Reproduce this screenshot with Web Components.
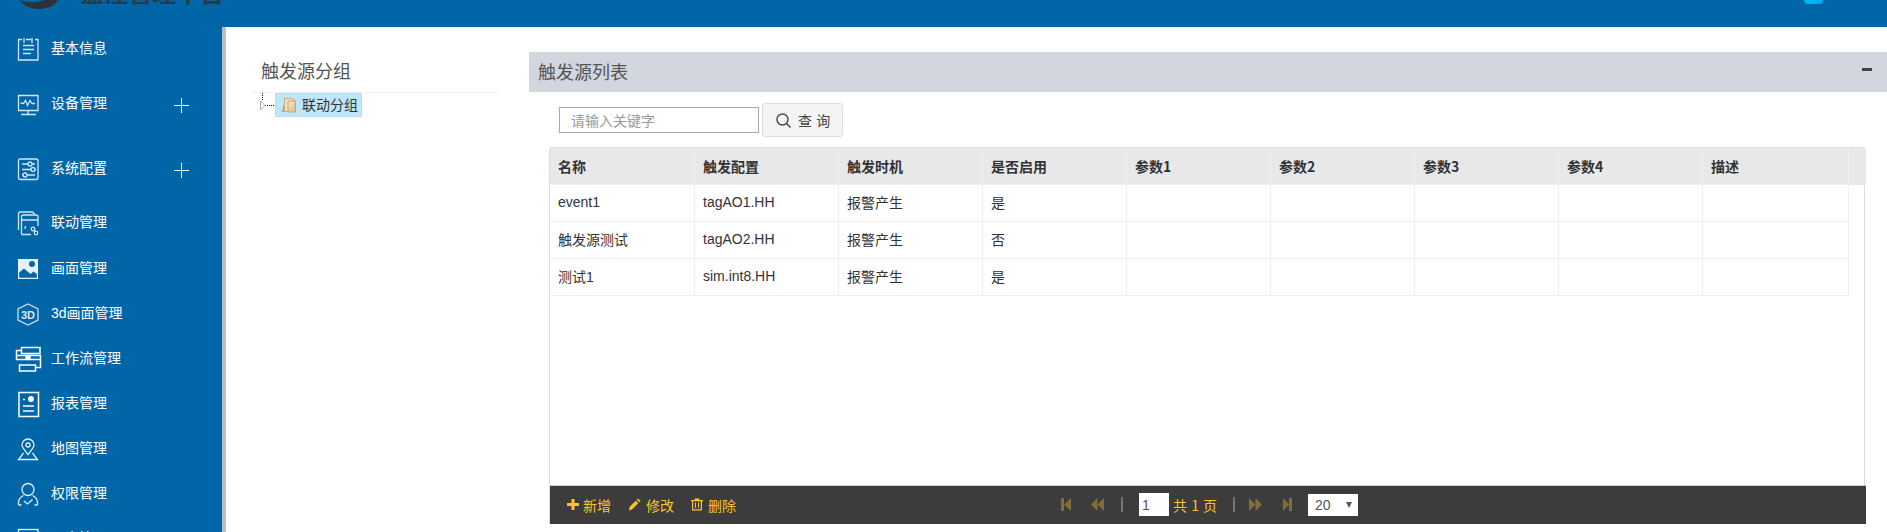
<!DOCTYPE html>
<html lang="zh">
<head>
<meta charset="utf-8">
<title>触发源管理</title>
<style>
html, body { margin: 0; height: 100%; overflow: hidden; background: #fff; }
body { font: 14px "Liberation Sans", "Noto Sans CJK SC", sans-serif; color: #333; }
</style>
</head>
<body>

<template id="app-shell-tpl">
<style>
:host { display: grid; grid-template-columns: 222px 1fr; grid-template-rows: 27px 1fr; height: 532px; overflow: hidden; }
::slotted([slot=top]) { grid-column: 1 / 3; }
.main { display: grid; grid-template-columns: 303px 1fr; border-left: 4px solid #b9bdc3; min-height: 0; overflow: hidden; }
</style>
<slot name="top"></slot>
<slot name="side"></slot>
<div class="main"><slot></slot></div>
</template>

<template id="top-bar-tpl">
<style>
:host { display: flex; align-items: flex-end; height: 27px; overflow: hidden; background: #0066a8; padding: 0 64px 0 20px; }
.logo { flex: none; width: 38px; height: 10px; margin-bottom: 17px; }
.name { flex: none; margin: 0 0 23px 22px; font: bold 24px/24px "Noto Sans CJK SC", sans-serif; color: #2b3a46; }
.badge { flex: none; width: 19px; height: 20px; margin: 0 0 23px auto; border-radius: 4px; background: #00b0f0; }
</style>
<svg class="logo" viewBox="0 0 38 10"><path d="M0 0H38C36 5 28 9 19 9 10 9 3 5 0 0z" fill="#2e3135"/><path d="M0 0C5 2.500 16 3.500 25 0z" fill="#0066a8"/></svg>
<span class="name">监控管理平台</span>
<span class="badge"></span>
</template>

<template id="side-nav-tpl">
<style>
:host { display: block; background: #0066a8; overflow: hidden; }
</style>
<slot></slot>
</template>

<template id="nav-item-tpl">
<style>
:host { display: flex; align-items: center; height: var(--h, 45px); padding-left: 15px; color: #fff; line-height: 20px; white-space: nowrap; }
.icon { flex: none; width: 26px; height: 26px; margin-right: 10px; display: block; }
::slotted(svg) { width: 26px; height: 26px; overflow: visible; }
.label { flex: none; width: 123px; }
.plus { flex: none; width: 15px; height: 15px; position: relative; margin-top: 4px; }
.plus::before { content: ""; position: absolute; left: 0; right: 0; top: 7px; height: 1px; background: #fff; }
.plus::after { content: ""; position: absolute; top: 0; bottom: 0; left: 7px; width: 1px; background: #fff; }
</style>
<span class="icon"><slot name="icon"></slot></span>
<span class="label"><slot></slot></span>
<span class="plus"></span>
</template>

<template id="tree-panel-tpl">
<style>
:host { display: block; padding: 25px 0 0 25px; }
h2 { margin: 0 0 0 10px; height: 40px; font: 400 18px/36px "Noto Sans CJK SC", sans-serif; color: #555; }
.rule { height: 1px; background: #f0f0f0; width: 248px; }
.node { display: flex; height: 24px; align-items: center; }
.lines { flex: none; width: 24px; height: 24px; }
.pick { display: flex; align-items: center; height: 24px; width: 87px; box-sizing: border-box; background: #bfe6fb; border: 1px solid #b5dff7; padding-left: 5px; color: #333; }
.pick svg { width: 16px; height: 16px; margin-right: 5px; flex: none; }
.pick span { font-size: 14px; line-height: 22px; }
</style>
<h2>触发源分组</h2>
<div class="rule"></div>
<div class="node">
  <svg class="lines" viewBox="0 0 24 24">
    <path d="M11.500 0v7M14 12.500h10" stroke="#111" stroke-dasharray="1 1" fill="none"/>
    <path d="M9.500 8v9l4.500-4.500z" fill="#fff" stroke="#aaa"/>
  </svg>
  <div class="pick">
    <svg viewBox="0 0 16 16">
      <defs><linearGradient id="fold" x1="0" y1="0" x2="1" y2="1"><stop offset="0" stop-color="#f8eccb"/><stop offset="1" stop-color="#d9bd84"/></linearGradient></defs>
      <path d="M0.500 15l2-7 3-1v8z" fill="#b7ad95"/>
      <path d="M3.500 1.500h7l3 1.500v11.500h-10z" fill="#f3e4bd" stroke="#c8ad75"/>
      <path d="M7 4h7.500v11H7z" fill="url(#fold)" stroke="#c2a56c"/>
    </svg>
    <span>联动分组</span>
  </div>
</div>
</template>

<template id="list-panel-tpl">
<style>
:host { display: block; padding-top: 25px; min-width: 0; }
header { display: flex; align-items: center; justify-content: space-between; height: 40px; background: #d2d6de; padding: 0 15px 0 9px; }
h2 { margin: 0; font: 400 18px/38px "Noto Sans CJK SC", sans-serif; color: #555; height: 40px; }
.minus { width: 10px; height: 3px; background: #444; margin-bottom: 6px; }
.body { padding: 0 21px 0 20px; }
</style>
<header><h2>触发源列表</h2><span class="minus"></span></header>
<div class="body"><slot></slot></div>
</template>

<template id="search-bar-tpl">
<style>
:host { display: flex; align-items: center; height: 34px; margin: 11px 0 10px 10px; }
input { box-sizing: border-box; width: 200px; height: 26px; margin: 0; border: 1px solid #aaa; padding: 0 11px; font: 14px "Noto Sans CJK SC", sans-serif; color: #333; outline: none; background: #fff; }
input::placeholder { color: #999; opacity: 1; }
button { box-sizing: border-box; display: flex; align-items: center; width: 81px; height: 34px; margin-left: 3px; padding: 0 0 0 13px; background: #f4f4f4; border: 1px solid #ddd; border-radius: 3px; font: 14px "Noto Sans CJK SC", sans-serif; word-spacing: 1px; color: #444; }
button svg { width: 15px; height: 15px; margin-right: 7px; flex: none; }
</style>
<input placeholder="请输入关键字">
<button type="button"><svg viewBox="0 0 15 15"><circle cx="6.500" cy="6.500" r="5.500" fill="none" stroke="#444" stroke-width="1.400"/><path d="M10.500 10.500l4 4" stroke="#444" stroke-width="1.400"/></svg>查 询</button>
</template>

<template id="data-grid-tpl">
<style>
:host { display: flex; flex-direction: column; height: 377px; box-sizing: border-box; border-top: 1px solid #ddd; border-left: 1px solid #ddd; width: 1317px; border-radius: 3px 3px 0 0; }
.wrap { flex: 1; border-right: 1px solid #ddd; margin-right: 1px; min-height: 0; }
table { border-collapse: separate; border-spacing: 0; table-layout: fixed; width: 1299px; font-size: 14px; }
.head { background: #e8e8e8; }
th, td { box-sizing: border-box; text-align: left; padding: 0 0 0 8px; height: 37px; border-right: 1px solid #f0f0f0; border-bottom: 1px solid #f0f0f0; color: #333; font-weight: 400; white-space: nowrap; overflow: hidden; }
td { padding-bottom: 2px; }
th { border-right-color: #f2f2f2; font-weight: 700; font-family: "Noto Sans CJK SC", sans-serif; }
.c1 { width: 145px; } .c { width: 144px; } .c9 { width: 146px; }
.foot { flex: none; display: flex; align-items: center; height: 39px; box-sizing: border-box; border-top: 1px solid #ccc; padding-bottom: 1px; background: #3c3c3c; color: #fdc326; }
</style>
<div class="head"><table>
  <colgroup><col class="c1"><col class="c"><col class="c"><col class="c"><col class="c"><col class="c"><col class="c"><col class="c"><col class="c9"></colgroup>
  <thead><tr id="hrow"></tr></thead>
</table></div>
<div class="wrap"><table>
  <colgroup><col class="c1"><col class="c"><col class="c"><col class="c"><col class="c"><col class="c"><col class="c"><col class="c"><col class="c9"></colgroup>
  <tbody id="rows"></tbody>
</table></div>
<div class="foot"><slot name="actions"></slot><slot name="pager"></slot></div>
</template>

<template id="grid-actions-tpl">
<style>
:host { display: flex; flex: none; box-sizing: border-box; width: 511px; align-items: center; padding-left: 17px; }
button { display: flex; align-items: center; background: none; border: 0; padding: 0; color: #fdc326; font: 14px "Noto Sans CJK SC", sans-serif; }
button + button { margin-left: 17px; }
svg { height: 13px; flex: none; fill: #fdc326; }
</style>
<button type="button"><svg style="width:12px;margin-right:4px" viewBox="0 0 12 13"><path d="M4.500 1h3v4H12v3H7.500v4h-3V8H0V5h4.500z"/></svg>新增</button>
<button type="button"><svg style="width:13px;margin-right:5px" viewBox="0 0 13 13"><path d="M10 .5L12.500 3l-1.300 1.300-2.500-2.500zM7.800 2.800l2.500 2.500L4 11.500 1 12.500l.5-3.500z"/></svg>修改</button>
<button type="button"><svg style="width:12px;margin-right:5px" viewBox="0 0 12 13"><path d="M4 .5h4l.8 1.500H12v1.200h-1V12.500H1V3.200H0V2h3.200zM2.200 3.200v8.100h7.600V3.200zM4 4.500h1v5.500H4zm3 0h1v5.500H7z"/></svg>删除</button>
</template>

<template id="grid-pager-tpl">
<style>
:host { display: flex; flex: none; align-items: center; color: #fdc326; }
svg { flex: none; height: 13px; fill: #fdc326; opacity: .36; }
.sep { flex: none; width: 2px; height: 15px; background: #777; }
input { box-sizing: border-box; width: 30px; height: 23px; border: 0; padding: 0 0 0 3px; font: 14px "Liberation Sans", sans-serif; color: #555; background: #fff; outline: none; }
.total { margin: 0 16px 0 4px; font: 14px "Noto Sans CJK SC", sans-serif; word-spacing: 1px; white-space: pre; }
.size { box-sizing: border-box; position: relative; width: 50px; height: 22px; padding-left: 7px; background: #fff; color: #555; font-size: 14px; line-height: 22px; margin-left: 16px; }
.size::after { content: ""; position: absolute; right: 6px; top: 8px; border: 3px solid transparent; border-top: 6px solid #555; border-bottom: 0; }
</style>
<svg style="width:10px" viewBox="0 0 10 13"><path d="M0 0h3v13H0zM3 6.500L10 0v13z"/></svg>
<svg style="width:13px;margin-left:20px" viewBox="0 0 13 13"><path d="M6.500 0v13L0 6.500zM13 0v13L6.500 6.500z"/></svg>
<span class="sep" style="margin:0 16px 0 17px"></span>
<input value="1">
<span class="total">共 1 页</span>
<span class="sep"></span>
<svg style="width:13px;margin-left:14px" viewBox="0 0 13 13"><path d="M0 0v13l6.500-6.500zM6.500 0v13L13 6.500z"/></svg>
<svg style="width:9px;margin-left:21px" viewBox="0 0 9 13"><path d="M0 0v13l6-6.500zM6 0h3v13H6z"/></svg>
<span class="size">20</span>
</template>

<script>
// every element just clones its template into an open shadow root
function mount(el, id) {
    el.attachShadow({mode: "open"});
    el.shadowRoot.appendChild(document.getElementById(id).content.cloneNode(true));
}

class AppShell extends HTMLElement {
    constructor() { super(); mount(this, "app-shell-tpl"); }
}
class TopBar extends HTMLElement {
    constructor() { super(); mount(this, "top-bar-tpl"); }
}
class SideNav extends HTMLElement {
    constructor() { super(); mount(this, "side-nav-tpl"); }
}
class NavItem extends HTMLElement {
    constructor() { super(); mount(this, "nav-item-tpl"); }
    connectedCallback() {
        if (!this.hasAttribute("expandable")) this.shadowRoot.querySelector(".plus").style.display = "none";
        if (this.hasAttribute("h")) this.style.setProperty("--h", this.getAttribute("h") + "px");
    }
}
class TreePanel extends HTMLElement {
    constructor() { super(); mount(this, "tree-panel-tpl"); }
}
class ListPanel extends HTMLElement {
    constructor() { super(); mount(this, "list-panel-tpl"); }
}
class SearchBar extends HTMLElement {
    constructor() { super(); mount(this, "search-bar-tpl"); }
}
class DataGrid extends HTMLElement {
    constructor() { super(); mount(this, "data-grid-tpl"); }
    connectedCallback() {
        let columns = ["名称", "触发配置", "触发时机", "是否启用", "参数1", "参数2", "参数3", "参数4", "描述"];
        let data = [
            ["event1", "tagAO1.HH", "报警产生", "是"],
            ["触发源测试", "tagAO2.HH", "报警产生", "否"],
            ["测试1", "sim.int8.HH", "报警产生", "是"]
        ];
        let hrow = this.shadowRoot.getElementById("hrow");
        for (let c of columns) {
            let th = document.createElement("th");
            th.textContent = c;
            hrow.appendChild(th);
        }
        let rows = this.shadowRoot.getElementById("rows");
        for (let d of data) {
            let tr = document.createElement("tr");
            for (let i = 0; i < columns.length; i++) {
                let td = document.createElement("td");
                td.textContent = d[i] || "";
                tr.appendChild(td);
            }
            rows.appendChild(tr);
        }
    }
}
class GridActions extends HTMLElement {
    constructor() { super(); mount(this, "grid-actions-tpl"); }
}
class GridPager extends HTMLElement {
    constructor() { super(); mount(this, "grid-pager-tpl"); }
}

customElements.define("app-shell", AppShell);
customElements.define("top-bar", TopBar);
customElements.define("side-nav", SideNav);
customElements.define("nav-item", NavItem);
customElements.define("tree-panel", TreePanel);
customElements.define("list-panel", ListPanel);
customElements.define("search-bar", SearchBar);
customElements.define("data-grid", DataGrid);
customElements.define("grid-actions", GridActions);
customElements.define("grid-pager", GridPager);
</script>

<app-shell>
  <top-bar slot="top"></top-bar>
  <side-nav slot="side">
    <nav-item h="42"><svg slot="icon" viewBox="0 0 26 26" fill="none" stroke="#d5e6f2" stroke-width="1.300"><path d="M7 4.500H3.500V25H23V4.500h-3M11 4.500h5M9 3v5M17 3v5M8 10.500h11M8 14.500h11M8 18.500h8"/></svg>基本信息</nav-item>
    <nav-item h="68" expandable><svg slot="icon" viewBox="0 0 26 26" fill="none" stroke="#d5e6f2" stroke-width="1.300"><path d="M3.500 5.500h19.500v15H3.500zM13 20.500v4M6 24.500h15M5.500 13l3 .5 2-3 2 5 2.500-5 2 3h3"/></svg>设备管理</nav-item>
    <nav-item h="62" expandable><svg slot="icon" viewBox="0 0 26 26" fill="none" stroke="#d5e6f2" stroke-width="1.300"><rect x="3.500" y="4" width="19.500" height="20.500" rx="2"/><path d="M7 9h6M17 9h3M7 14.500h9M20 14.500h1M7 20h1M12 20h8"/><circle cx="15" cy="9" r="2"/><circle cx="18" cy="14.500" r="2"/><circle cx="10" cy="20" r="2"/></svg>系统配置</nav-item>
    <nav-item h="46"><svg slot="icon" viewBox="0 0 26 26" fill="none" stroke="#d5e6f2" stroke-width="1.300"><path d="M3.500 21V5q0-2 2-2h11q2 0 3 2M6.500 25.500V8q0-2 2-2H21q2 0 2 2v9M6.500 25.500H16M6.500 11H23M10.500 17l-.5 3"/><circle cx="18" cy="20" r="1.800"/><circle cx="21" cy="24" r="1.800"/><path d="M19 21.500l1 1"/></svg>联动管理</nav-item>
    <nav-item><svg slot="icon" viewBox="0 0 26 26"><path d="M3 4h20v20H3z" fill="#e8f1f7"/><path d="M4.200 22.800v-5.300l4.800-4 6.500 5.500 3-2.500 3.300 2.500v3.800z" fill="#0066a8"/><circle cx="17" cy="9" r="3" fill="#0066a8"/></svg>画面管理</nav-item>
    <nav-item><svg slot="icon" viewBox="0 0 26 26" fill="none" stroke="#c9deed" stroke-width="1.300"><path d="M13 4l10 5v11l-10 5-10-5V9z"/><text x="13" y="19" text-anchor="middle" font-family="Liberation Sans" font-weight="700" font-size="11" fill="#dbe9f3" stroke="none">3D</text></svg>3d画面管理</nav-item>
    <nav-item><svg slot="icon" viewBox="0 0 26 26" fill="none" stroke="#fff" stroke-width="1.500"><path d="M6.500 2.500h18.500v6H6.500zM6.500 5.500H1.500v9H25.500v8H21M1.500 10.500H25.500v4M4.500 20h16v6h-16z"/><circle cx="13" cy="12.500" r="2" fill="#fff"/></svg>工作流管理</nav-item>
    <nav-item><svg slot="icon" viewBox="0 0 26 26" fill="none" stroke="#fff" stroke-width="1.500"><path d="M4 2.500h19.500v24H4zM8 9.500h2M8 16h11M8 21h11"/><circle cx="16" cy="9" r="2.200" fill="#fff"/></svg>报表管理</nav-item>
    <nav-item><svg slot="icon" viewBox="0 0 26 26" fill="none" stroke="#e4eef6" stroke-width="1.300"><path d="M13 19.500C9 14.500 7 12.500 7 10a6 6 0 0 1 12 0c0 2.500-2 4.500-6 9.500z"/><circle cx="13" cy="10" r="2"/><path d="M8.500 18L3.500 24.500h19L17.500 18"/></svg>地图管理</nav-item>
    <nav-item><svg slot="icon" viewBox="0 0 26 26" fill="none" stroke="#e4eef6" stroke-width="1.300"><circle cx="13" cy="9.500" r="6"/><path d="M3.500 25v-2.500q0-4.500 5-7M22.500 25v-2.500q0-4.500-5-7M3.500 25h3M22.500 25h-3M9 21l3.500 3 5-4.500"/></svg>权限管理</nav-item>
    <nav-item><svg slot="icon" viewBox="0 0 26 26" fill="none" stroke="#e4eef6" stroke-width="1.300"><rect x="3.500" y="4.500" width="19.500" height="20"/></svg>日志管理</nav-item>
  </side-nav>
  <tree-panel></tree-panel>
  <list-panel>
    <search-bar></search-bar>
    <data-grid>
      <grid-actions slot="actions"></grid-actions>
      <grid-pager slot="pager"></grid-pager>
    </data-grid>
  </list-panel>
</app-shell>
</body>
</html>
